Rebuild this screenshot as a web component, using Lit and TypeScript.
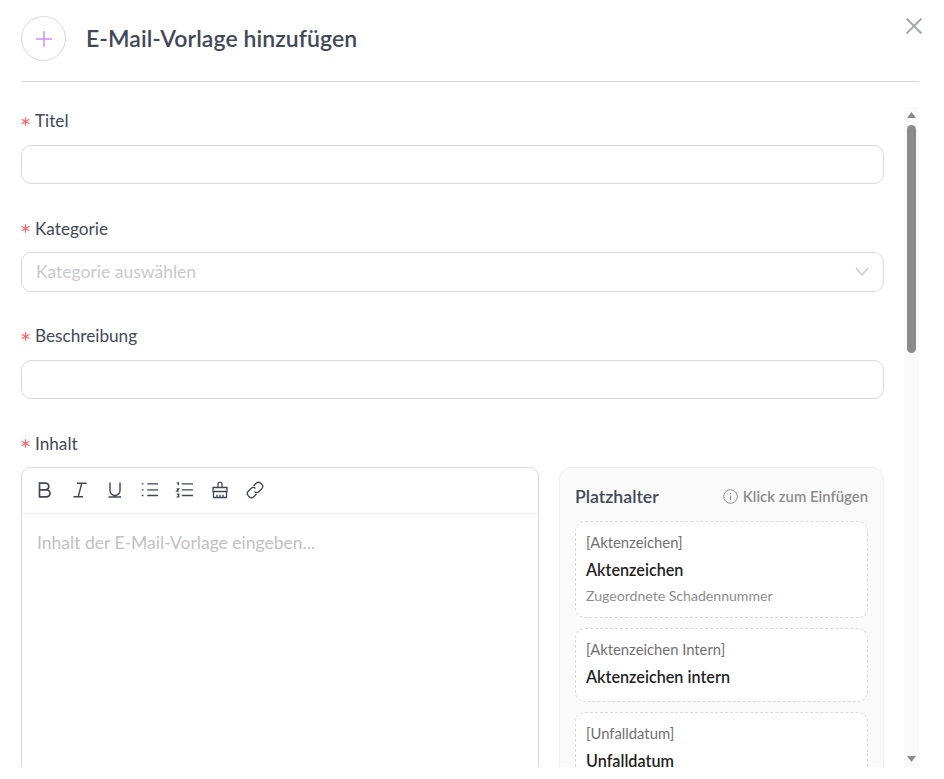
import {css, html, LitElement} from 'lit';
import {customElement} from 'lit/decorators.js';

const placeholders = [
  {token: '[Aktenzeichen]', name: 'Aktenzeichen', note: 'Zugeordnete Schadennummer'},
  {token: '[Aktenzeichen Intern]', name: 'Aktenzeichen intern', note: ''},
  {token: '[Unfalldatum]', name: 'Unfalldatum', note: ''},
];

@customElement('app-root')
export class AppRoot extends LitElement {
  static override styles = css`
      :host {
          display: block;
          width: 944px;
          height: 779px;
          overflow: hidden;
          background: #fff;
          font-family: "Lato", "Noto Sans", sans-serif;
          color: #3f4654;
      }

      .dialog {
          position: relative;
          padding: 16px 25px 0 21px;
          height: 751px;
      }

      .header {
          display: flex;
          align-items: center;
          gap: 20px;
          height: 45px;
          padding-bottom: 20px;
          border-bottom: 1px solid #d9d9d9;
      }

      .circle {
          width: 43px;
          height: 43px;
          border: 1px solid #d9d9d9;
          border-radius: 50%;
          display: flex;
          align-items: center;
          justify-content: center;
      }

      .title {
          margin: 0;
          font-size: 23px;
          font-weight: 600;
          letter-spacing: 0.08px;
          color: #414957;
          position: relative;
          top: -1px;
      }

      .close {
          position: absolute;
          left: 905px;
          top: 17px;
          width: 18px;
          height: 18px;
      }

      .main {
          display: flex;
          height: 660px;
          margin-top: 25px;
      }

      .scroll {
          width: 863px;
          height: 660px;
          overflow: hidden;
          padding-top: 2.3px;
          box-sizing: border-box;
          flex: none;
      }

      .field {
          margin-bottom: 32.6px;
      }

      label {
          display: flex;
          align-items: center;
          height: 24px;
          margin-bottom: 11.5px;
          font-size: 17.2px;
          line-height: 24px;
          color: #414957;
      }

      .star {
          margin-right: 5px;
          width: 9px;
          display: block;
          flex: none;
      }

      .input {
          box-sizing: border-box;
          height: 39.4px;
          border: 1px solid #d9d9d9;
          border-radius: 10px;
          display: flex;
          align-items: center;
          justify-content: space-between;
          padding: 0 14px;
          font-size: 17.5px;
          color: #c9c9cc;
      }

      .content-row {
          display: flex;
          gap: 20px;
      }

      .editor {
          box-sizing: border-box;
          width: 518px;
          height: 400px;
          flex: none;
          border: 1px solid #d9d9d9;
          border-radius: 10px 10px 0 0;
      }

      .toolbar {
          display: flex;
          align-items: center;
          gap: 15.1px;
          height: 43px;
          padding: 0 0 2px 12.5px;
          border-bottom: 1px solid #ececec;
      }

      .toolbar svg {
          width: 20px;
          height: 20px;
          display: block;
      }

      .editor-text {
          padding: 17px 15px;
          font-size: 17.5px;
          line-height: 24px;
          color: #c4bfc4;
      }

      .panel {
          box-sizing: border-box;
          flex: 1;
          height: 400px;
          background: #fafafa;
          border: 1px solid #f0f0f0;
          border-radius: 12px;
          padding: 15px;
      }

      .panel-head {
          display: flex;
          align-items: center;
          justify-content: space-between;
          height: 26px;
          margin-bottom: 12px;
      }

      .panel-title {
          font-size: 17.7px;
          font-weight: 600;
          color: #414957;
      }

      .hint {
          display: flex;
          align-items: center;
          gap: 5px;
          font-size: 14.9px;
          font-weight: 600;
          color: #8c8c8c;
      }

      .ph {
          box-sizing: border-box;
          background: #fff;
          border: 1px dashed #d9d9d9;
          border-radius: 10px;
          padding: 9px 10px 12px;
          margin-bottom: 10px;
      }

      .token {
          font-size: 14.8px;
          line-height: 22px;
          color: #6f6f6f;
      }

      .name {
          font-size: 16.2px;
          font-weight: 600;
          line-height: 24px;
          margin-top: 5px;
          color: #1f1f1f;
      }

      .note {
          font-size: 14.1px;
          line-height: 20px;
          margin: 4px 0 -1px;
          color: #8c8c8c;
      }

      .bar {
          width: 15px;
          height: 660px;
          margin-left: 20px;
          flex: none;
          background: #fafafa;
          position: relative;
      }

      .thumb {
          position: absolute;
          left: 3px;
          top: 18px;
          width: 9px;
          height: 228px;
          border-radius: 5px;
          background: #8b8b8b;
      }

      .arrow {
          position: absolute;
          left: 3px;
          width: 9px;
          height: 6px;
      }

      .up { top: 5px; }
      .down { bottom: 5px; }
  `;

  private star() {
    return html`<svg class="star" viewBox="0 0 9 9"><path d="M4.500 .3v8.400M.7 2.300l7.600 4.400M8.300 2.300L.7 6.700" stroke="#ff6468" stroke-width="1.200" fill="none"/></svg>`;
  }

  private field(title: string, inner: unknown = '') {
    return html`
      <div class="field">
        <label>${this.star()}${title}</label>
        <div class="input">${inner}</div>
      </div>
    `;
  }

  override render() {
    return html`
      <div class="dialog">
        <div class="header">
          <div class="circle">
            <svg width="18" height="18" viewBox="0 0 18 18"><path d="M9 1v16M1 9h16" stroke="#cd8df5" stroke-width="1.500"/></svg>
          </div>
          <h1 class="title">E-Mail-Vorlage hinzufügen</h1>
        </div>
        <svg class="close" viewBox="0 0 18 18"><path d="M1.500 1.500l15 15M16.500 1.500l-15 15" stroke="#a3a6ad" stroke-width="1.800"/></svg>
        <div class="main">
          <div class="scroll">
            ${this.field('Titel')}
            ${this.field('Kategorie', html`
              <span>Kategorie auswählen</span>
              <svg width="14" height="9" viewBox="0 0 14 9"><path d="M1 1l6 7 6-7" stroke="#c9c9cc" stroke-width="1.200" fill="none"/></svg>
            `)}
            ${this.field('Beschreibung')}
            <label>${this.star()}Inhalt</label>
            <div class="content-row">
              <div class="editor">
                <div class="toolbar">
                  <svg viewBox="0 0 20 20" fill="none" stroke="#3f4654" stroke-width="1.700"><path d="M4.500 3.200h6a3.300 3.300 0 010 6.600h-6zM4.500 9.800h7a3.500 3.500 0 010 7h-7z"/></svg>
                  <svg viewBox="0 0 20 20" fill="none" stroke="#3f4654" stroke-width="1.400"><path d="M7 3.200h9.500M3.500 16.800H13M11.800 3.200L8.200 16.800"/></svg>
                  <svg viewBox="0 0 20 20" fill="none" stroke="#3f4654" stroke-width="1.400"><path d="M5 2.500v8a5 5 0 0010 0v-8M3.500 17h12.700"/></svg>
                  <svg viewBox="0 0 20 20" fill="none" stroke="#3f4654" stroke-width="1.300"><path d="M7.300 3.800H18M7.300 9.800H18M7.300 15.500H18M1.700 3.800h1.800M1.700 9.800h1.800M1.700 15.500h1.800"/></svg>
                  <svg viewBox="0 0 20 20" fill="none" stroke="#3f4654" stroke-width="1.300"><path d="M6.700 3.800H18M6.700 9.800H18M6.700 15.500H18M1.700 2.800h1.600v2.400M1.700 8.800h2L1.700 11.200h2M1.700 14.200h2v2.600h-2"/></svg>
                  <svg viewBox="0 0 20 20" fill="none" stroke="#3f4654" stroke-width="1.300"><path d="M8 7.500V3.500a1.200 1.200 0 011.200-1.200h1.600A1.200 1.200 0 0112 3.500v4M3 7.500h14v4H3zM3.500 11.500v6h13v-6M7 17.500v-2.800M10 17.500v-2.800M13 17.500v-2.800"/></svg>
                  <svg viewBox="0 0 20 20" fill="none" stroke="#3f4654" stroke-width="1.300"><path d="M8.500 6l2.700-2.700a3.200 3.200 0 014.500 0l1 1a3.200 3.200 0 010 4.500L14 11.500a3.200 3.200 0 01-4.500 0M11.500 14l-2.700 2.700a3.200 3.200 0 01-4.500 0l-1-1a3.200 3.200 0 010-4.500L6 8.500a3.200 3.200 0 014.500 0"/></svg>
                </div>
                <div class="editor-text">Inhalt der E-Mail-Vorlage eingeben...</div>
              </div>
              <div class="panel">
                <div class="panel-head">
                  <span class="panel-title">Platzhalter</span>
                  <span class="hint">
                    <svg width="15" height="15" viewBox="0 0 15 15" fill="none" stroke="#8c8c8c" stroke-width="1"><circle cx="7.500" cy="7.500" r="6.800"/><path d="M7.500 6.500v4.500M7.500 4v1.200"/></svg>
                    Klick zum Einfügen
                  </span>
                </div>
                ${placeholders.map(p => html`
                  <div class="ph">
                    <div class="token">${p.token}</div>
                    <div class="name">${p.name}</div>
                    ${p.note ? html`<div class="note">${p.note}</div>` : ''}
                  </div>
                `)}
              </div>
            </div>
          </div>
          <div class="bar">
            <svg class="arrow up" viewBox="0 0 9 6"><path d="M4.500 0l4.500 6H0z" fill="#8b8b8b"/></svg>
            <div class="thumb"></div>
            <svg class="arrow down" viewBox="0 0 9 6"><path d="M0 0h9L4.500 6z" fill="#8b8b8b"/></svg>
          </div>
        </div>
      </div>
    `;
  }
}

declare global {
  interface HTMLElementTagNameMap {
    'app-root': AppRoot;
  }
}
